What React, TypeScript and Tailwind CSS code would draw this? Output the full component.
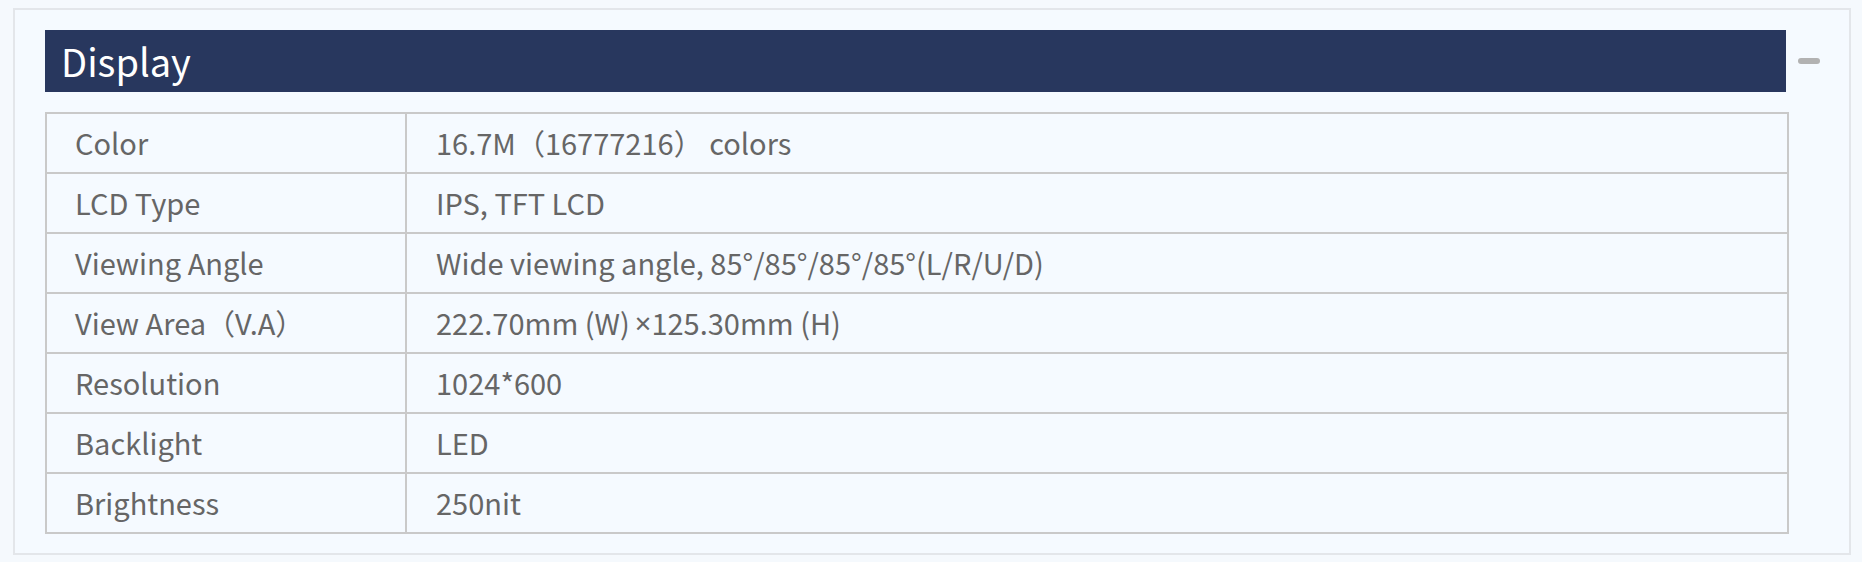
import React from 'react';

const latin = { fontFamily: '"Noto Sans", sans-serif' };

const specs: [string, React.ReactNode][] = [
  ['Color', '16.7M（16777216） colors'],
  ['LCD Type', 'IPS, TFT LCD'],
  ['Viewing Angle', 'Wide viewing angle, 85°/85°/85°/85°(L/R/U/D)'],
  ['View Area（V.A）', <>222.70mm (W) <span className="ml-[5px]" style={latin}>×</span>125.30mm (H)</>],
  ['Resolution', '1024*600'],
  ['Backlight', 'LED'],
  ['Brightness', '250nit'],
];

const App: React.FC = () => {
  return (
    <div
      className="min-h-[562px] bg-[#f5f9fd] pt-[8px] pl-[13px]"
      style={{ fontFamily: '"Noto Sans CJK SC", "Noto Sans", sans-serif' }}
    >
      <div className="w-[1838px] h-[547px] border-2 border-[#e3e6ea] bg-[#f5faff] pt-[20px] pl-[30px]">
        <div className="flex items-center">
          <div className="w-[1741px] h-[62px] bg-[#28375e] flex items-center pl-[16px]">
            <span className="text-white text-[38px] leading-none">Display</span>
          </div>
          <button className="ml-[12px] w-[22px] h-[6px] rounded-full bg-[#b2b2b2]" aria-label="collapse" />
        </div>
        <div className="mt-[20px] w-[1744px] border-t-2 border-l-2 border-[#c9c9c9] text-[#666] text-[29px]">
          {specs.map(([label, value]) => (
            <div key={label} className="flex">
              <div className="w-[360px] h-[60px] border-r-2 border-b-2 border-[#c9c9c9] flex items-center px-[28px]">
                {label}
              </div>
              <div className="w-[1382px] h-[60px] border-r-2 border-b-2 border-[#c9c9c9] flex items-center px-[29px]">
                {value}
              </div>
            </div>
          ))}
        </div>
      </div>
    </div>
  );
};

export default App;
